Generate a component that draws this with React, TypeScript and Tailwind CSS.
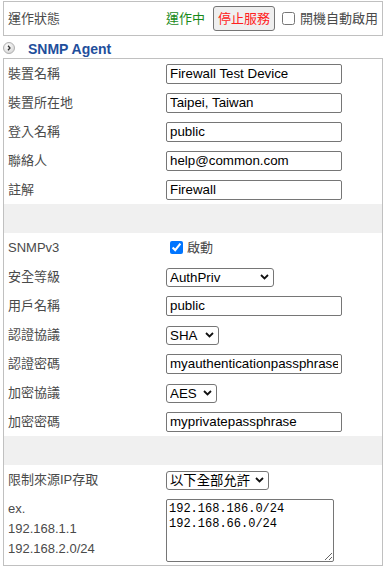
import React from 'react';

const font = { fontFamily: '"Liberation Sans", "Noto Sans CJK TC", sans-serif' };

const Chevron = () => (
  <svg width="9" height="6" viewBox="0 0 9 6" className="absolute right-[5px] top-1/2 -translate-y-1/2 pointer-events-none">
    <path d="M1 1 L4.5 4.5 L8 1" fill="none" stroke="#111" strokeWidth="1.8" />
  </svg>
);

const Select = ({ value, options, width }: { value: string; options: string[]; width: string }) => (
  <div className={`relative ${width}`}>
    <select
      defaultValue={value}
      className="appearance-none w-full h-[19px] border border-[#767676] rounded-[3px] bg-white pl-[3px] pr-[16px] text-[13.33px] leading-none text-black"
    >
      {options.map(o => (
        <option key={o}>{o}</option>
      ))}
    </select>
    <Chevron />
  </div>
);

const TextInput = ({ value }: { value: string }) => (
  <input
    defaultValue={value}
    className="w-[176px] h-[20px] border border-[#767676] rounded-[2px] bg-white px-[3px] text-[13.33px] leading-none text-black"
  />
);

const Row = ({ label, children }: { label: string; children: React.ReactNode }) => (
  <div className="flex items-center h-[29px]">
    <div className="w-[162px] pl-[4px] text-[13px] leading-none text-[#4a4a4a]">{label}</div>
    <div className="flex items-center">{children}</div>
  </div>
);

const Band = () => <div className="h-[29px] bg-[#f0f0f0]" />;

export default function App() {
  return (
    <div className="w-[384px] h-[569px] bg-white text-[#4a4a4a]" style={font}>
      <div className="pt-[1px] px-[3px]">
        <div className="w-[380px] h-[35px] border border-[#c0c0c0] flex items-center">
          <div className="w-[162px] pl-[4px] text-[13px] leading-none text-[#4a4a4a]">運作狀態</div>
          <span className="text-[13px] leading-none text-[#1a8a1a]">運作中</span>
          <button className="ml-[8px] w-[62px] h-[25px] border border-[#767676] rounded-[3px] bg-[#efefef] text-[13px] leading-none text-[#ff2020]">
            停止服務
          </button>
          <input type="checkbox" className="ml-[7px] w-[13px] h-[13px]" />
          <span className="ml-[5px] text-[13px] leading-none text-[#4a4a4a]">開機自動啟用</span>
        </div>

        <div className="h-[22px] flex items-center">
          <svg width="12" height="12" viewBox="0 0 12 12" className="mt-[1px]">
            <defs>
              <radialGradient id="g" cx="40%" cy="35%" r="70%">
                <stop offset="0%" stopColor="#ffffff" />
                <stop offset="100%" stopColor="#d4d4d4" />
              </radialGradient>
            </defs>
            <circle cx="6" cy="6" r="5.5" fill="url(#g)" stroke="#b0b0b0" />
            <path d="M5 3.8 L7 6 L5 8.2" fill="none" stroke="#333" strokeWidth="1.3" />
          </svg>
          <span className="ml-[13px] mt-[3px] text-[14px] font-bold leading-none text-[#1f4f9c]">SNMP Agent</span>
        </div>

        <div className="w-[380px] border border-[#c0c0c0]">
          <Row label="裝置名稱"><TextInput value="Firewall Test Device" /></Row>
          <Row label="裝置所在地"><TextInput value="Taipei, Taiwan" /></Row>
          <Row label="登入名稱"><TextInput value="public" /></Row>
          <Row label="聯絡人"><TextInput value="help@common.com" /></Row>
          <Row label="註解"><TextInput value="Firewall" /></Row>
          <Band />
          <Row label="SNMPv3">
            <input type="checkbox" defaultChecked className="ml-[4px] w-[13px] h-[13px]" />
            <span className="ml-[4px] text-[13px] leading-none text-[#4a4a4a]">啟動</span>
          </Row>
          <Row label="安全等級">
            <Select value="AuthPriv" options={['NoAuthNoPriv', 'AuthNoPriv', 'AuthPriv']} width="w-[108px]" />
          </Row>
          <Row label="用戶名稱"><TextInput value="public" /></Row>
          <Row label="認證協議">
            <Select value="SHA" options={['MD5', 'SHA']} width="w-[53px]" />
          </Row>
          <Row label="認證密碼"><TextInput value="myauthenticationpassphrase" /></Row>
          <Row label="加密協議">
            <Select value="AES" options={['DES', 'AES']} width="w-[51px]" />
          </Row>
          <Row label="加密密碼"><TextInput value="myprivatepassphrase" /></Row>
          <Band />
          <Row label="限制來源IP存取">
            <Select value="以下全部允許" options={['以下全部允許', '以下全部拒絕']} width="w-[103px]" />
          </Row>
          <div className="flex h-[71px]">
            <div className="w-[162px] pl-[4px] pt-[9px] text-[13px] text-[#4a4a4a] flex flex-col gap-[8px] leading-[12px]">
              <span>ex.</span>
              <span>192.168.1.1</span>
              <span>192.168.2.0/24</span>
            </div>
            <div className="pt-[5px]">
              <textarea
                defaultValue={'192.168.186.0/24\n192.168.66.0/24'}
                className="block w-[168px] h-[63px] border border-[#767676] rounded-[2px] bg-white p-[2px] text-[12px] leading-[15px] text-black"
                style={{ fontFamily: '"Liberation Mono", monospace' }}
              />
            </div>
          </div>
        </div>
      </div>
    </div>
  );
}
